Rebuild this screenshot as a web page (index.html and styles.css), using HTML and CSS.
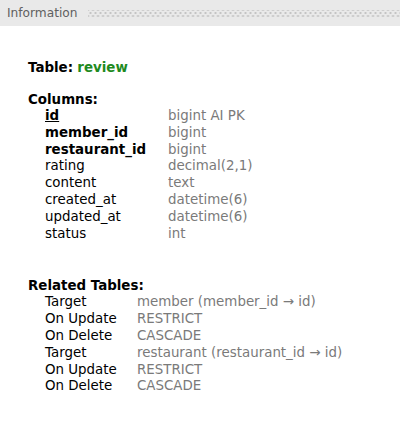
FILE: index.html
```html
<!DOCTYPE html>
<html>
<head>
<meta charset="utf-8">
<link rel="stylesheet" href="styles.css">
</head>
<body>
<div class="header">
  <span class="title">Information</span>
  <span class="dots"></span>
</div>
<div class="content">
  <div class="table-line"><b>Table:</b> <b class="green">review</b></div>
  <div class="section-title">Columns:</div>
  <div class="grid cols">
    <span class="name b u">id</span><span class="val">bigint AI PK</span>
    <span class="name b">member_id</span><span class="val">bigint</span>
    <span class="name b">restaurant_id</span><span class="val">bigint</span>
    <span class="name">rating</span><span class="val">decimal(2,1)</span>
    <span class="name">content</span><span class="val">text</span>
    <span class="name">created_at</span><span class="val">datetime(6)</span>
    <span class="name">updated_at</span><span class="val">datetime(6)</span>
    <span class="name">status</span><span class="val">int</span>
  </div>
  <div class="section-title related">Related Tables:</div>
  <div class="grid rels">
    <span class="name">Target</span><span class="val">member (member_id → id)</span>
    <span class="name">On Update</span><span class="val">RESTRICT</span>
    <span class="name">On Delete</span><span class="val">CASCADE</span>
    <span class="name">Target</span><span class="val">restaurant (restaurant_id → id)</span>
    <span class="name">On Update</span><span class="val">RESTRICT</span>
    <span class="name">On Delete</span><span class="val">CASCADE</span>
  </div>
</div>
</body>
</html>
```
FILE: styles.css
```css
html, body { margin: 0; padding: 0; background: #fff; }
body { font-family: "DejaVu Sans", Tahoma, sans-serif; font-size: 13.4px; color: #000; width: 400px; height: 430px; overflow: hidden; }
.header { height: 26px; background: #e9e9e9; display: flex; align-items: center; padding-left: 7px; gap: 10px; }
.title { color: #606060; font-size: 12.2px; }
.dots { flex: 1; height: 8px; margin-top: 1px;
  background:
    radial-gradient(circle, #c4c4c4 0.9px, transparent 1.3px) 0 0 / 5px 6px,
    radial-gradient(circle, #c4c4c4 0.9px, transparent 1.3px) 2.5px 3px / 5px 6px; }
.content { padding: 34px 0 0 28px; }
.table-line { line-height: 16px; }
.green { color: #1e8a1e; }
.section-title { font-weight: bold; line-height: 16px; margin-top: 16px; }
.related { margin-top: 36px; }
.grid { display: grid; padding-left: 17px; line-height: 16.8px; }
.cols { grid-template-columns: 123px auto; }
.rels { grid-template-columns: 92px auto; }
.name { color: #000; }
.b { font-weight: bold; }
.u { text-decoration: underline; }
.val { color: #7a7a7a; }
```
